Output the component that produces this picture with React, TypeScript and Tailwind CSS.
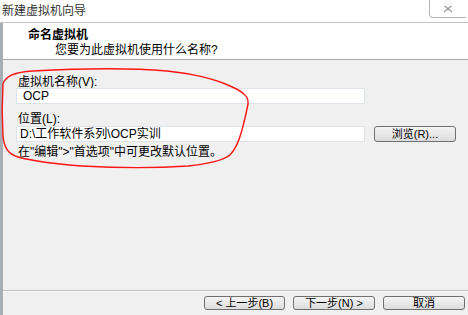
import React from "react";

const font = { fontFamily: '"Liberation Sans", "Noto Sans CJK SC", sans-serif' };

function WinButton({ children, className = "" }: { children: React.ReactNode; className?: string }) {
  return (
    <div
      className={
        "flex items-center justify-center rounded-[3px] border border-[#707070] bg-gradient-to-b from-[#f4f4f4] to-[#dcdcdc] text-[11px] leading-none text-black " +
        className
      }
    >
      {children}
    </div>
  );
}

function RedCircle() {
  // hand-drawn marker ellipse over the form
  return (
    <svg
      className="pointer-events-none absolute left-0 top-0"
      width="468"
      height="315"
      viewBox="0 0 468 315"
    >
      <path
        d="M3,84 C5,76 14,72 33,71 C70,69 120,67 167,71 C195,74 215,79 230,86 C244,92 249,97 248,104 C246,115 244,122 242,130 C239,141 236,149 230,155 C222,161 208,164 188,166 C158,168 118,168 82,166 C55,164 33,161 18,157 C7,154 4,146 3,136 C2,120 2,100 3,84"
        fill="none"
        stroke="#ff1414"
        strokeWidth="1.4"
      />
    </svg>
  );
}

export default function App() {
  return (
    <div className="relative flex h-[315px] w-[468px] flex-col overflow-hidden bg-white" style={font}>
      {/* title bar */}
      <div className="flex h-[22px] items-start bg-white">
        <span className="pl-[2px] pt-[4px] text-[12px] leading-[14px] text-[#333]">新建虚拟机向导</span>
        <div className="ml-auto mr-[2px] flex h-[18px] w-[37px] items-center justify-center rounded-bl-[4px] border-b border-l border-[#b4b4b4]">
          <svg width="10" height="8" viewBox="0 0 10 8">
            <path d="M1,1 L9,7 M9,1 L1,7 M2,1 L9,6.5 M8,1 L1,6.5" stroke="#8a8a8a" strokeWidth="0.8" fill="none" />
          </svg>
        </div>
      </div>
      <div className="h-px bg-[#c4c4c4]" />

      <div className="flex flex-1 border-l-[3px] border-[#a5aeb4]">
        <div className="flex flex-1 flex-col">
          {/* header */}
          <div className="h-[37px] border-b border-[#a8a8a8] bg-white">
            <div className="pl-[25px] pt-[5px] text-[12px] font-bold leading-[14px] text-black">命名虚拟机</div>
            <div className="pl-[52px] pt-[1px] text-[12px] leading-[14px] text-black">您要为此虚拟机使用什么名称?</div>
          </div>

          {/* body */}
          <div className="flex flex-1 flex-col bg-[#f0f0f0] pl-[13px] text-[12px] text-black">
            <div className="mt-[15px] pl-[2px] leading-[14px]">虚拟机名称(V):</div>
            <div className="mt-[-1px] flex h-[16px] w-[349px] items-center border border-[#dde3e9] bg-white pl-[6px] leading-none">
              OCP
            </div>
            <div className="mt-[8px] pl-[2px] leading-[14px]">位置(L):</div>
            <div className="flex items-center">
              <div className="flex h-[16px] w-[349px] items-center border border-[#dde3e9] bg-white pl-[3px] leading-none">
                D:\工作软件系列\OCP实训
              </div>
              <WinButton className="ml-[9px] h-[16px] w-[82px]">浏览(R)...</WinButton>
            </div>
            <div className="mt-[3px] pl-[2px] leading-[14px]">在"编辑"&gt;"首选项"中可更改默认位置。</div>
          </div>

          {/* footer */}
          <div className="h-px bg-[#c0c0c0]" />
          <div className="h-px bg-[#fafafa]" />
          <div className="flex h-[23px] items-start justify-end gap-[8px] bg-[#f0f0f0] pr-[3px] pt-[4px]">
            <WinButton className="h-[14px] w-[81px]">&lt; 上一步(B)</WinButton>
            <WinButton className="h-[14px] w-[82px]">下一步(N) &gt;</WinButton>
            <WinButton className="h-[14px] w-[82px]">取消</WinButton>
          </div>
        </div>
      </div>

      <RedCircle />
    </div>
  );
}
